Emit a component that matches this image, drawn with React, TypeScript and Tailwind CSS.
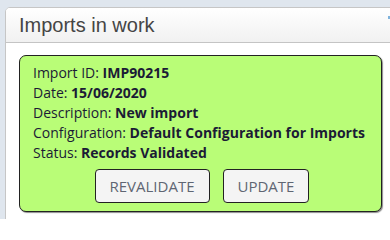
import React from "react";

export default function App() {
  const rows: [string, string][] = [
    ["Import ID:", "IMP90215"],
    ["Date:", "15/06/2020"],
    ["Description:", "New import"],
    ["Configuration:", "Default Configuration for Imports"],
    ["Status:", "Records Validated"],
  ];
  return (
    <div className="w-[390px] h-[219px] overflow-hidden bg-[#dfe6ee] pt-[7px] pl-[5px]">
      <div className="w-[400px] h-[230px] border border-[#c6c6c6] rounded-tl-[5px] bg-white overflow-hidden">
        <div className="h-[35px] flex items-center px-[13px] border-b border-[#c4c4c4] bg-gradient-to-b from-[#ffffff] to-[#f1f1f1] relative">
          <span className="text-[20px] text-[#454545] font-['Liberation_Sans',Arial,sans-serif]">Imports in work</span>
          <span className="absolute left-[382px] top-[8px] w-[3px] h-[3px] bg-[#7fb3dc]" />
        </div>
        <div className="pl-[13px] pt-[12px]">
          <div className="w-[363px] rounded-[7px] border border-[#222] bg-[#b9fd77] shadow-[1px_1px_1px_rgba(0,0,0,0.45)] pl-[13px] pr-[10px] pt-[7px] pb-[8px] font-['Open_Sans','Noto_Sans',sans-serif] text-[14px] leading-[20px] text-[#1b1b35]">
            {rows.map(([k, v]) => (
              <div key={k} className="whitespace-nowrap">
                {k} <span className="font-bold">{v}</span>
              </div>
            ))}
            <div className="flex justify-center gap-[13px] mt-[6px]">
              <button className="h-[34px] px-[14px] rounded-[4px] border border-[#222] bg-[#f4f4f4] text-[#5f6673] text-[15px] uppercase">
                Revalidate
              </button>
              <button className="h-[34px] px-[14px] rounded-[4px] border border-[#222] bg-[#f4f4f4] text-[#5f6673] text-[15px] uppercase">
                Update
              </button>
            </div>
          </div>
        </div>
      </div>
    </div>
  );
}
